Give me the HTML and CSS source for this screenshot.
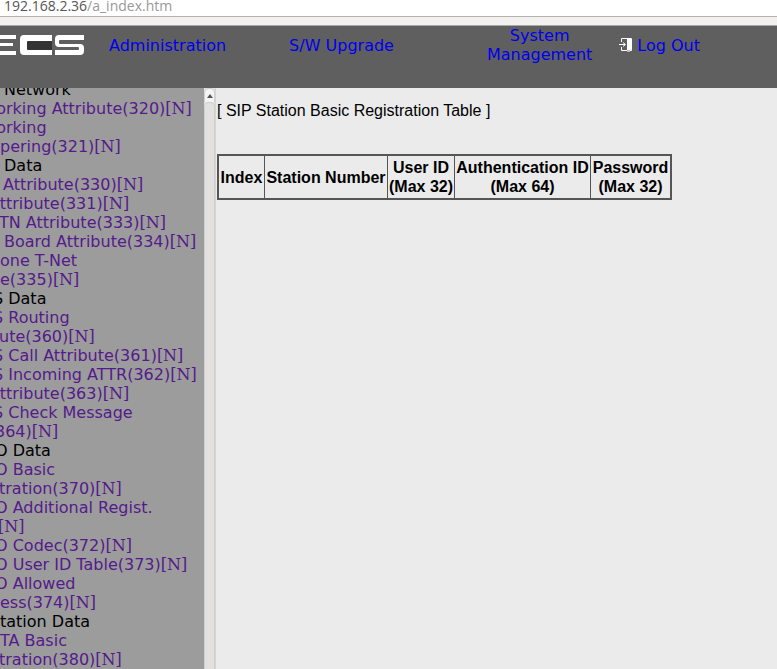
FILE: index.html
```html
<!DOCTYPE html>
<html lang="en">
<head>
<meta charset="utf-8">
<title>SIP Station Basic Registration Table</title>
<link rel="stylesheet" href="styles.css">
</head>
<body>
<div class="urlbar"><span class="host">192.168.2.36</span><span class="path">/a_index.htm</span></div>
<div class="toolband"></div>
<header class="top">
  <svg class="logo" width="85" height="62" viewBox="0 0 85 62" aria-label="ECS logo">
    <rect x="27" y="15" width="25" height="9" fill="#333"/>
    <path fill="#fff" d="M0 9H16V13H0ZM0 17H13V20H0ZM0 25H16V29H0Z"/>
    <path fill="#fff" d="M24 9H52V15H28Q27 15 27 16V23Q27 24 28 24H52V29H24Q20 29 20 25V13Q20 9 24 9Z"/>
    <path fill="#fff" d="M59 9H84V14H60Q59 14 59 15V17Q59 18 60 18H80Q84 18 84 22V25Q84 29 80 29H55V24H78Q79 24 79 23V22Q79 21 78 21H59Q55 21 55 17V13Q55 9 59 9Z"/>
  </svg>
  <a class="nav nav-admin" href="#">Administration</a>
  <a class="nav nav-upgrade" href="#">S/W Upgrade</a>
  <a class="nav nav-system" href="#">System<br>Management</a>
  <a class="nav nav-logout" href="#">
    <svg class="door" width="14" height="16" viewBox="0 0 14 16" aria-hidden="true">
      <path fill="none" stroke="#fff" stroke-width="1" d="M2.5 5V1.5H12.5V13.5H2.5V10"/>
      <path fill="#fff" d="M8 2H13V12L8 15Z"/>
      <path fill="#bbb" d="M8 13H11V15H8Z"/>
      <path fill="none" stroke="#fff" stroke-width="1" d="M0 7.5H6M4 5.5L6.5 7.5L4 9.5"/>
    </svg>
    <span>Log Out</span>
  </a>
</header>
<div class="main">
  <nav class="side">
    <div class="tree">
      <div class="row hd x4">Network</div>
      <a class="row xn" href="#">Networking Attribute(320)<span class="n">[N]</span></a>
      <a class="row xn" href="#">Networking</a>
      <a class="row x0" href="#">pering(321)<span class="n">[N]</span></a>
      <div class="row hd x4">Data</div>
      <a class="row x3" href="#">Attribute(330)<span class="n">[N]</span></a>
      <a class="row xa" href="#">Attribute(331)<span class="n">[N]</span></a>
      <a class="row x1" href="#">TN Attribute(333)<span class="n">[N]</span></a>
      <a class="row x4" href="#">Board Attribute(334)<span class="n">[N]</span></a>
      <a class="row x0" href="#">one T-Net</a>
      <a class="row x0" href="#">e(335)<span class="n">[N]</span></a>
      <div class="row hd xs">S Data</div>
      <a class="row xs" href="#">S Routing</a>
      <a class="row x1" href="#">ute(360)<span class="n">[N]</span></a>
      <a class="row xs" href="#">S Call Attribute(361)<span class="n">[N]</span></a>
      <a class="row xs" href="#">S Incoming ATTR(362)<span class="n">[N]</span></a>
      <a class="row xa" href="#">Attribute(363)<span class="n">[N]</span></a>
      <a class="row xs" href="#">S Check Message</a>
      <a class="row x5" href="#">364)<span class="n">[N]</span></a>
      <div class="row hd xo">O Data</div>
      <a class="row xo" href="#">O Basic</a>
      <a class="row x1" href="#">tration(370)<span class="n">[N]</span></a>
      <a class="row xo" href="#">O Additional Regist.</a>
      <a class="row x2" href="#"><span class="n">[N]</span></a>
      <a class="row xo" href="#">O Codec(372)<span class="n">[N]</span></a>
      <a class="row xo" href="#">O User ID Table(373)<span class="n">[N]</span></a>
      <a class="row xo" href="#">O Allowed</a>
      <a class="row x0" href="#">ess(374)<span class="n">[N]</span></a>
      <div class="row hd x0">tation Data</div>
      <a class="row x0" href="#">TA Basic</a>
      <a class="row x1" href="#">tration(380)<span class="n">[N]</span></a>
    </div>
  </nav>
  <div class="scrollbar" aria-hidden="true">
    <div class="sb-btn"><span class="sb-arrow"></span></div>
    <div class="sb-thumb"></div>
  </div>
  <main class="content">
    <p class="title">[ SIP Station Basic Registration Table ]</p>
    <table class="grid">
      <tr>
        <th class="c1">Index</th>
        <th class="c2">Station Number</th>
        <th class="c3">User ID<br>(Max 32)</th>
        <th class="c4">Authentication ID<br>(Max 64)</th>
        <th class="c5">Password<br>(Max 32)</th>
      </tr>
    </table>
  </main>
</div>
</body>
</html>
```
FILE: styles.css
```css
html, body {
  margin: 0;
  padding: 0;
  height: 669px;
  overflow: hidden;
  background: #ebebeb;
}
body {
  display: flex;
  flex-direction: column;
  font-family: "DejaVu Sans", sans-serif;
  font-size: 16px;
}
.urlbar {
  height: 16px;
  background: #fff;
  border-bottom: 1px solid #b5b3ae;
  padding-left: 4px;
  font-family: "Open Sans", sans-serif;
  font-size: 14px;
  line-height: 12px;
  white-space: nowrap;
}
.host { color: #555; }
.path { color: #999; }
.toolband {
  height: 8px;
  background: #f2f1f0;
  border-bottom: 1px solid #a8a8a8;
}
.top {
  height: 62px;
  flex: none;
  background: #5f5f5f;
  display: flex;
  align-items: flex-start;
}
.logo { flex: none; display: block; }
.nav {
  color: #0000ee;
  text-decoration: none;
  line-height: 19px;
  text-align: center;
  flex: none;
}
.nav-admin { margin: 10px 0 0 24px; }
.nav-upgrade { margin: 10px 0 0 63px; }
.nav-system { margin: 0 0 0 93px; padding-top: 0; }
.nav-logout {
  margin: 10px 0 0 27px;
  display: flex;
  align-items: center;
  gap: 4px;
}
.door { flex: none; margin-top: -2px; }
.main {
  flex: 1;
  display: flex;
  min-height: 0;
}
.side {
  width: 204px;
  flex: none;
  background: #9c9c9c;
  overflow: hidden;
}
.tree { margin-top: -8px; }
.row {
  display: block;
  height: 19px;
  line-height: 19px;
  white-space: nowrap;
  color: #551a8b;
  text-decoration: none;
}
.row.hd { color: #000; }
.n { font-family: "DejaVu Serif", serif; }
.x0 { margin-left: 0; }
.x1 { margin-left: -1px; }
.x2 { margin-left: -2px; }
.x3 { margin-left: 3px; }
.x4 { margin-left: 4px; }
.x5 { margin-left: -5px; }
.xn { margin-left: -45px; }
.xa { margin-left: -11px; }
.xs { margin-left: -7px; }
.xo { margin-left: -5px; }
.scrollbar {
  width: 11px;
  flex: none;
  background: #e4e3e1;
  border-right: 1px solid #d4d4d4;
  display: flex;
  flex-direction: column;
}
.sb-btn {
  height: 14px;
  background: #f4f4f3;
  border: 1px solid #cfcfcf;
  border-bottom: 0;
  border-radius: 5px 5px 0 0;
  box-sizing: border-box;
  display: flex;
  justify-content: center;
  padding-top: 5px;
}
.sb-arrow {
  width: 0;
  height: 0;
  border-left: 3px solid transparent;
  border-right: 3px solid transparent;
  border-bottom: 4px solid #555;
}
.sb-thumb {
  flex: 1;
  background: #e2e1df;
  border: 1px solid #cfcfcf;
  border-bottom: 0;
  border-radius: 5px 5px 0 0;
}
.content {
  flex: 1;
  padding: 14px 0 0 1px;
  background: #ebebeb;
  font-family: "Liberation Sans", sans-serif;
  color: #000;
  min-width: 0;
}
.title {
  margin: 0 0 34px;
  line-height: 18px;
}
.grid {
  border-collapse: collapse;
  table-layout: fixed;
  width: 453px;
  border: 2px solid;
  border-color: #555 #555 #555 #555;
}
.grid th {
  border: 1px solid #555;
  padding: 2px 0;
  line-height: 19px;
  font-size: 16px;
  font-weight: bold;
  text-align: center;
  white-space: nowrap;
}
.c1 { width: 45px; }
.c2 { width: 122px; }
.c3 { width: 66px; }
.c4 { width: 135px; }
.c5 { width: 79px; }
```
